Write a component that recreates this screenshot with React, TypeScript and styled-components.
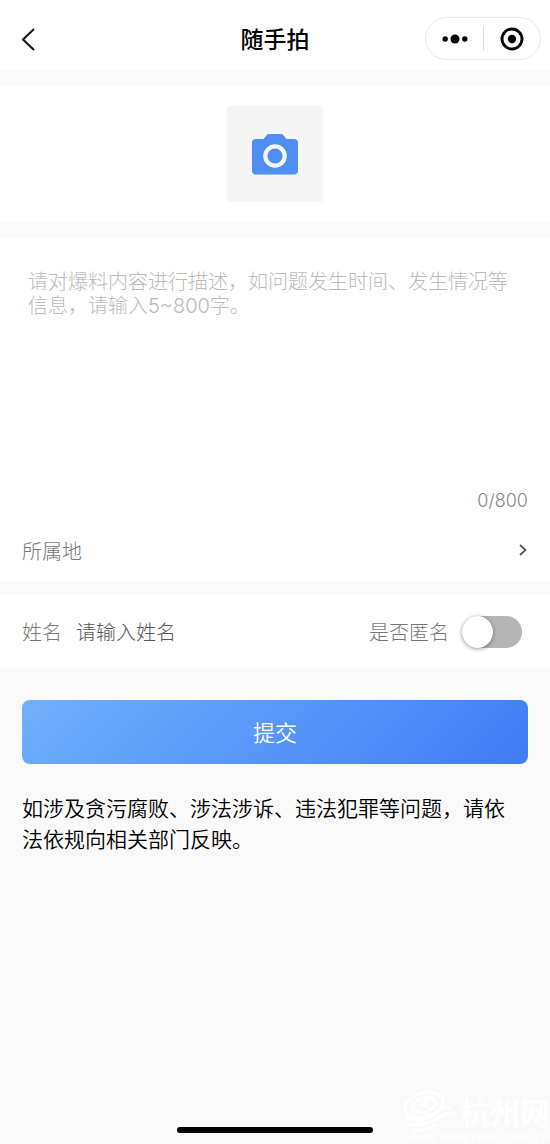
import { useState } from 'react';
import styled, { createGlobalStyle } from 'styled-components';

const GlobalStyle = createGlobalStyle`
  *, *::before, *::after { box-sizing: border-box; }
  body {
    margin: 0;
    background: #fafafa;
    font-family: "Noto Sans CJK SC", "Noto Sans", sans-serif;
    color: #111;
  }
  button, input, textarea { font: inherit; color: inherit; }
`;

const Page = styled.div`
  position: relative;
  display: flex;
  flex-direction: column;
  min-height: 100vh;
  overflow: hidden;
`;

const Header = styled.header`
  display: grid;
  grid-template-columns: 1fr auto 1fr;
  align-items: center;
  padding: 17px 9px 11px;
  background: #fff;
`;

const IconButton = styled.button<{ $width: number }>`
  display: flex;
  align-items: center;
  justify-content: center;
  width: ${(p) => p.$width}px;
  height: 32px;
  padding: 0;
  border: 0;
  background: none;
  cursor: pointer;
`;

const Title = styled.h1`
  margin: 0;
  padding-bottom: 1px;
  font-size: 23px;
  line-height: 32px;
  font-weight: 500;
  color: #000;
`;

const Capsule = styled.div`
  display: flex;
  align-items: center;
  justify-self: end;
  height: 43px;
  border: 1px solid #e8e8e8;
  border-radius: 22px;
`;

const CapsuleDivider = styled.span`
  width: 1px;
  height: 25px;
  background: #ddd;
`;

const Form = styled.form`
  display: flex;
  flex-direction: column;
  gap: 14px;
  padding-top: 14px;
`;

const Panel = styled.section`
  background: #fff;
`;

const PhotoPanel = styled(Panel)`
  display: flex;
  justify-content: center;
  padding: 21px 0;
`;

const PhotoButton = styled.button`
  display: flex;
  align-items: center;
  justify-content: center;
  width: 96px;
  height: 96px;
  padding: 0;
  border: 0;
  border-radius: 4px;
  background: #f5f5f5;
  cursor: pointer;
`;

const Description = styled.textarea`
  display: block;
  width: 100%;
  height: 248px;
  padding: 33px 28px 0;
  border: 0;
  outline: 0;
  resize: none;
  background: transparent;
  font-family: Inter, "Noto Sans CJK SC", sans-serif;
  font-size: 20px;
  line-height: 24px;
  font-weight: 300;
  color: #333;
  &::placeholder { color: #bbb; opacity: 1; }
`;

const Counter = styled.output`
  display: block;
  padding: 0 22px;
  text-align: right;
  font-family: Inter, "Noto Sans CJK SC", sans-serif;
  font-size: 18px;
  line-height: 32px;
  font-weight: 300;
  color: #888;
`;

const LocationRow = styled.button`
  display: flex;
  align-items: center;
  justify-content: space-between;
  width: 100%;
  height: 58px;
  margin: 4px 0 0;
  padding: 0 22px;
  border: 0;
  background: none;
  font-size: 20px;
  font-weight: 300;
  color: #777;
  cursor: pointer;
`;

const DetailsPanel = styled(Panel)`
  padding-bottom: 2px;
`;

const NameRow = styled(Panel)`
  display: flex;
  align-items: center;
  height: 73px;
  padding: 0 28px 0 22px;
`;

const Label = styled.label`
  flex: none;
  font-size: 20px;
  line-height: 30px;
  font-weight: 300;
  color: #777;
`;

const NameInput = styled.input`
  flex: 1;
  min-width: 0;
  height: 30px;
  margin: 0 14px;
  padding: 0;
  border: 0;
  outline: 0;
  background: transparent;
  font-size: 20px;
  font-weight: 300;
  &::placeholder { color: #555; opacity: 1; }
`;

const Switch = styled.input`
  appearance: none;
  flex: none;
  display: flex;
  align-items: center;
  width: 60px;
  height: 32px;
  margin: 0 0 0 13px;
  border-radius: 16px;
  background: #b5b5b5;
  cursor: pointer;
  &::before {
    content: "";
    width: 31px;
    height: 32px;
    border-radius: 50%;
    background: #fff;
    box-shadow: 0 1px 4px rgba(0, 0, 0, 0.4);
  }
  &:checked {
    justify-content: flex-end;
    background: #4a86f7;
  }
`;

const SubmitArea = styled.div`
  padding: 18px 22px 0;
`;

const SubmitButton = styled.button`
  display: block;
  width: 100%;
  height: 64px;
  padding: 0 0 2px;
  border: 0;
  border-radius: 8px;
  background: linear-gradient(135deg, #70b0fa, #5796fa 50%, #407cf6);
  font-size: 22px;
  font-weight: 350;
  color: #fff;
  cursor: pointer;
`;

const Notice = styled.p`
  margin: 28px 0 0;
  padding-right: 8px;
  font-size: 21px;
  line-height: 31px;
  font-weight: 350;
  color: #000;
`;

const HomeBar = styled.div`
  width: 196px;
  height: 6px;
  margin: auto auto 11px;
  border-radius: 3px;
  background: #000;
`;

const Watermark = styled.div`
  position: absolute;
  right: 0;
  bottom: 0;
  display: flex;
  flex-direction: column;
  align-items: flex-end;
  color: #fff;
  pointer-events: none;
`;

const WatermarkBrand = styled.div`
  display: flex;
  align-items: center;
  gap: 4px;
  height: 36px;
  font-size: 30px;
  line-height: 36px;
  font-weight: 700;
`;

const WatermarkUrl = styled.div`
  font: 700 13px/15px "Liberation Sans", sans-serif;
`;

export default function App() {
  const [text, setText] = useState('');

  return (
    <Page>
      <GlobalStyle />
      <Header>
        <IconButton type="button" aria-label="返回" $width={38}>
          <svg width="14" height="24" viewBox="0 0 14 24" fill="none" stroke="#111" strokeWidth="2" strokeLinecap="round" strokeLinejoin="round">
            <path d="M12.500 2.500 2 12.500 12.500 22.500" />
          </svg>
        </IconButton>
        <Title>随手拍</Title>
        <Capsule>
          <IconButton type="button" aria-label="更多" $width={57}>
            <svg width="26" height="10" viewBox="0 0 26 10">
              <circle cx="3.200" cy="5" r="2.700" />
              <circle cx="13" cy="5" r="4.500" />
              <circle cx="22.800" cy="5" r="2.700" />
            </svg>
          </IconButton>
          <CapsuleDivider />
          <IconButton type="button" aria-label="关闭" $width={56}>
            <svg width="24" height="24" viewBox="0 0 24 24">
              <circle cx="12" cy="12" r="10" fill="none" stroke="#000" strokeWidth="2.800" />
              <circle cx="12" cy="12" r="4.200" />
            </svg>
          </IconButton>
        </Capsule>
      </Header>

      <Form onSubmit={(e) => e.preventDefault()}>
        <PhotoPanel>
          <PhotoButton type="button" aria-label="拍照">
            <svg width="46" height="41" viewBox="0 0 46 41">
              <path
                fill="#4f8ef3"
                d="M4 5H11.500L15 .8Q15.700 0 16.700 0H29.300Q30.300 0 31 .8L34.500 5H42Q46 5 46 9V36.500Q46 40.500 42 40.500H4Q0 40.500 0 36.500V9Q0 5 4 5Z"
              />
              <circle cx="23" cy="22" r="9.700" fill="none" stroke="#f5f5f5" strokeWidth="4.200" />
            </svg>
          </PhotoButton>
        </PhotoPanel>

        <DetailsPanel>
          <Description
            aria-label="爆料内容"
            maxLength={800}
            value={text}
            onChange={(e) => setText(e.target.value)}
            placeholder="请对爆料内容进行描述，如问题发生时间、发生情况等信息，请输入5~800字。"
          />
          <Counter>{text.length}/800</Counter>
          <LocationRow type="button">
            所属地
            <svg width="10" height="12" viewBox="0 0 10 12" fill="none" stroke="#555" strokeWidth="1.700">
              <path d="M2 1 7.500 6 2 11" />
            </svg>
          </LocationRow>
        </DetailsPanel>

        <NameRow>
          <Label htmlFor="name">姓名</Label>
          <NameInput id="name" type="text" placeholder="请输入姓名" />
          <Label htmlFor="anonymous">是否匿名</Label>
          <Switch id="anonymous" type="checkbox" role="switch" />
        </NameRow>

        <SubmitArea>
          <SubmitButton type="submit">提交</SubmitButton>
          <Notice>如涉及贪污腐败、涉法涉诉、违法犯罪等问题，请依法依规向相关部门反映。</Notice>
        </SubmitArea>
      </Form>

      <HomeBar />

      <Watermark aria-hidden="true">
        <WatermarkBrand>
          <svg width="54" height="42" viewBox="0 0 54 42" fill="none" stroke="#fff" strokeWidth="3" strokeLinecap="round">
            <ellipse cx="22" cy="15" rx="20" ry="12" transform="rotate(-15 22 15)" />
            <ellipse cx="22" cy="15" rx="12" ry="7" transform="rotate(-15 22 15)" />
            <circle cx="23" cy="14" r="2" />
            <path d="M4 27Q16 35 30 25T48 18M7 34Q20 37 34 29T52 24M12 40Q24 41 34 35" />
          </svg>
          杭州网
        </WatermarkBrand>
        <WatermarkUrl>www.hangzhou.com.cn</WatermarkUrl>
      </Watermark>
    </Page>
  );
}
